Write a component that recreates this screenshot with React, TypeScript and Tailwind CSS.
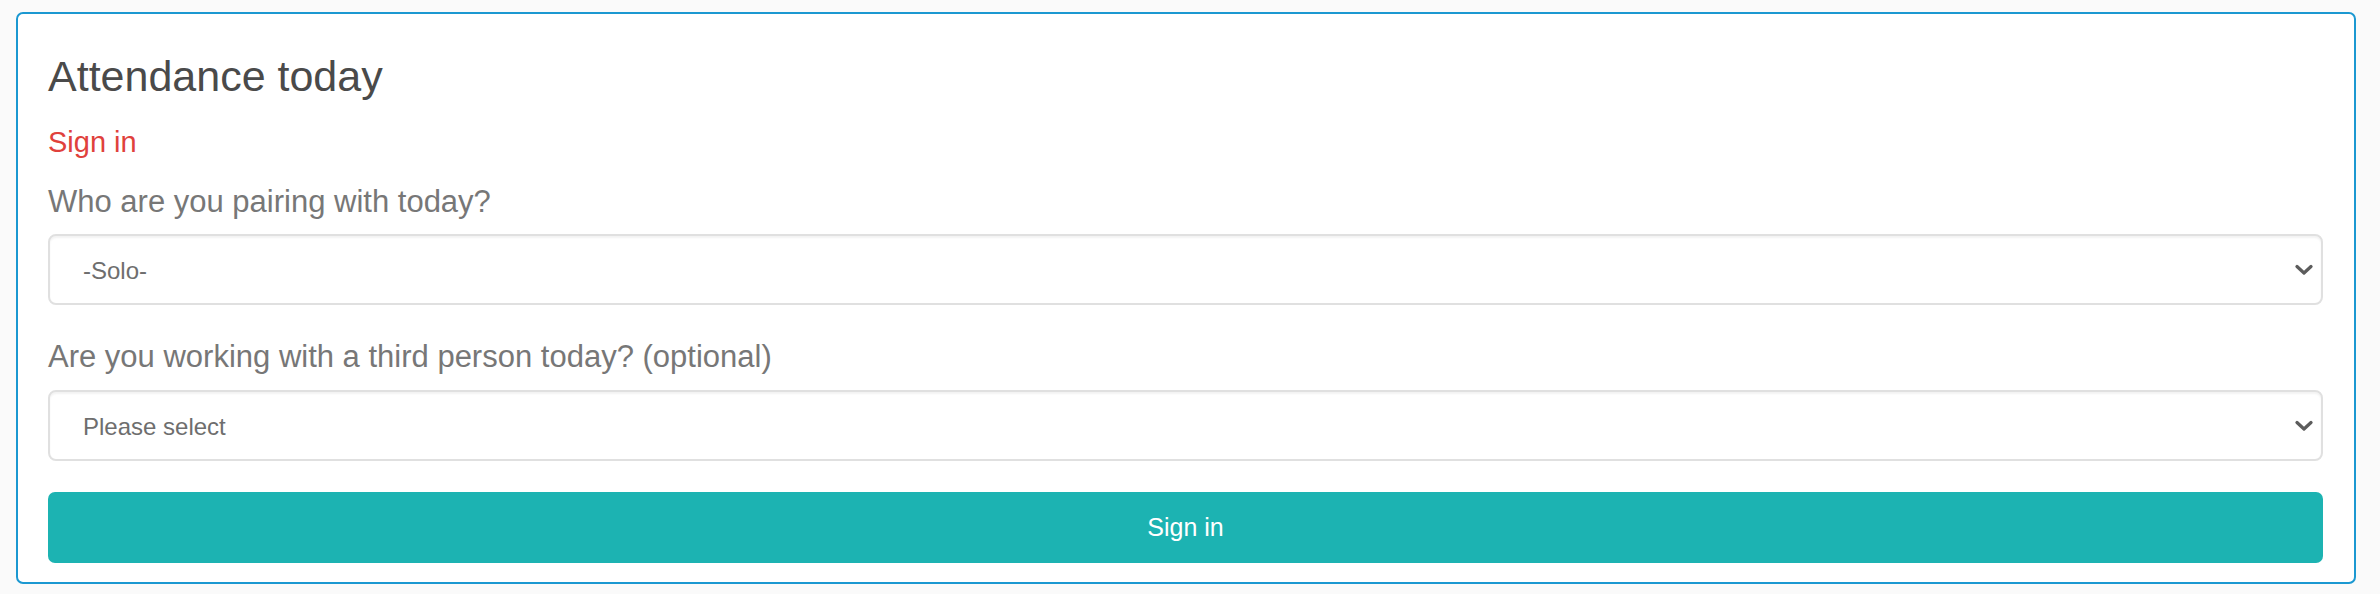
import React from 'react';

function Chevron() {
  return (
    <svg width="18" height="12" viewBox="0 0 18 12" className="absolute right-[8px] top-1/2 -translate-y-1/2">
      <path d="M2 2.5 L9 9 L16 2.5" fill="none" stroke="#5c5c5c" strokeWidth="3.2" strokeLinecap="round" strokeLinejoin="round" />
    </svg>
  );
}

function SelectBox({ value }: { value: string }) {
  return (
    <div className="relative flex h-[71px] items-center rounded-[8px] border-2 border-[#e0e0e0] bg-white pl-[33px] pt-[3px] shadow-[inset_0_2px_2px_rgba(0,0,0,0.05)]">
      <span className="text-[24px] font-light text-[#6e6e6e]">{value}</span>
      <Chevron />
    </div>
  );
}

export default function App() {
  return (
    <div className="min-h-[594px] bg-[#fafafa] pt-[12px] font-['Liberation_Sans',Arial,sans-serif]">
      <div className="ml-[16px] mr-[24px] rounded-[7px] border-2 border-[#1b98d1] bg-white pl-[30px] pr-[31px] pt-[38px] pb-[19px]">
        <h1 className="h-[48px] text-[43px] leading-[48px] font-light text-[#4a4a4a]">Attendance today</h1>
        <p className="mt-[24px] h-[36px] text-[29px] leading-[36px] text-[#e0413c]">Sign in</p>
        <label className="mt-[22px] block h-[40px] text-[31px] leading-[40px] text-[#777]">
          Who are you pairing with today?
        </label>
        <div className="mt-[12px]">
          <SelectBox value="-Solo-" />
        </div>
        <label className="mt-[32px] block h-[40px] text-[31px] leading-[40px] text-[#777]">
          Are you working with a third person today? (optional)
        </label>
        <div className="mt-[13px]">
          <SelectBox value="Please select" />
        </div>
        <button className="mt-[31px] flex h-[71px] w-full items-center justify-center rounded-[7px] bg-[#1cb3b2] text-[25px] text-white">
          Sign in
        </button>
      </div>
    </div>
  );
}
